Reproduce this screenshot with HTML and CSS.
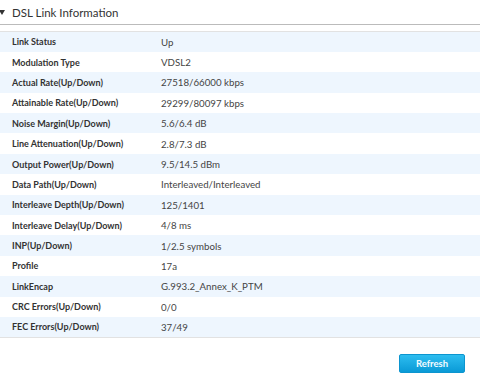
FILE: index.html
```html
<!DOCTYPE html>
<html lang="en">

<head>
    <meta charset="utf-8">
    <title>DSL Link Information</title>
    <link rel="stylesheet" href="styles.css">
</head>

<body>
    <div class="panel">
        <!-- Section title -->
        <div class="panel-title">
            <span class="arrow"></span>
            <span>DSL Link Information</span>
        </div>

        <!-- Link details -->
        <table class="info-table">
            <tr><td class="label">Link Status</td><td>Up</td></tr>
            <tr><td class="label">Modulation Type</td><td>VDSL2</td></tr>
            <tr><td class="label">Actual Rate(Up/Down)</td><td>27518/66000 kbps</td></tr>
            <tr><td class="label">Attainable Rate(Up/Down)</td><td>29299/80097 kbps</td></tr>
            <tr><td class="label">Noise Margin(Up/Down)</td><td>5.6/6.4 dB</td></tr>
            <tr><td class="label">Line Attenuation(Up/Down)</td><td>2.8/7.3 dB</td></tr>
            <tr><td class="label">Output Power(Up/Down)</td><td>9.5/14.5 dBm</td></tr>
            <tr><td class="label">Data Path(Up/Down)</td><td>Interleaved/Interleaved</td></tr>
            <tr><td class="label">Interleave Depth(Up/Down)</td><td>125/1401</td></tr>
            <tr><td class="label">Interleave Delay(Up/Down)</td><td>4/8 ms</td></tr>
            <tr><td class="label">INP(Up/Down)</td><td>1/2.5 symbols</td></tr>
            <tr><td class="label">Profile</td><td>17a</td></tr>
            <tr><td class="label">LinkEncap</td><td>G.993.2_Annex_K_PTM</td></tr>
            <tr><td class="label">CRC Errors(Up/Down)</td><td>0/0</td></tr>
            <tr><td class="label">FEC Errors(Up/Down)</td><td>37/49</td></tr>
        </table>

        <div class="actions">
            <button class="btn">Refresh</button>
        </div>
    </div>
</body>

</html>
```

FILE: styles.css
```css
body {
    margin: 0;
    padding: 0;
    background-color: #fff;
    font-family: Lato, "Open Sans", sans-serif;
    color: #333;
}

.panel {
    width: 480px;
}

.panel-title {
    display: flex;
    align-items: center;
    gap: 7px;
    height: 24px;
    font-size: 11.5px;
    color: #333;
    border-bottom: 1px solid #bbb;
}

.arrow {
    width: 0;
    height: 0;
    margin-left: -1px;
    border-left: 3px solid transparent;
    border-right: 3px solid transparent;
    border-top: 5px solid #333;
}

.info-table {
    width: 100%;
    margin-top: 6px;
    border-collapse: collapse;
    border-top: 1px solid #e2e2e2;
    border-bottom: 1px solid #e2e2e2;
    font-size: 9.7px;
}

.info-table tr {
    height: 20.4px;
}

.info-table tr:nth-child(odd) {
    background-color: #eef6fe;
}

.info-table td {
    padding: 0 0 0 12px;
    white-space: nowrap;
    color: #444;
}

.info-table td.label {
    width: 137px;
    font-size: 9px;
    font-weight: bold;
    color: #333;
}

.actions {
    display: flex;
    justify-content: flex-end;
    padding: 16px 15px 0 0;
}

.btn {
    width: 66px;
    height: 19px;
    padding: 0;
    font-family: inherit;
    font-size: 9.5px;
    font-weight: bold;
    color: #f4fbff;
    background: linear-gradient(#2dbdf0, #0a9ad6);
    border: 1px solid #0c95cf;
    border-radius: 2px;
    cursor: pointer;
}
```
